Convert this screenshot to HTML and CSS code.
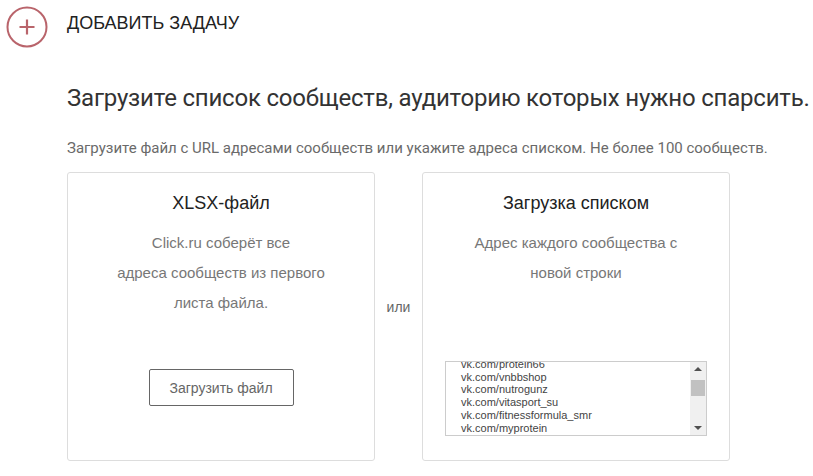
FILE: index.html
```html
<!DOCTYPE html>
<html lang="ru">
<head>
    <meta charset="UTF-8">
    <title>Добавить задачу</title>
    <link rel="stylesheet" href="styles.css">
</head>
<body>
    <div class="header">
        <span class="add-icon">
            <svg width="42" height="42" viewBox="0 0 42 42">
                <circle cx="21" cy="21" r="19.5" fill="none" stroke="#b9646b" stroke-width="2"/>
                <path d="M21 13.5v15M13.5 21h15" stroke="#b9646b" stroke-width="2.2"/>
            </svg>
        </span>
        <span class="header-title">ДОБАВИТЬ ЗАДАЧУ</span>
    </div>

    <div class="content">
        <h1 class="lead">Загрузите список сообществ, аудиторию которых нужно спарсить.</h1>
        <p class="hint">Загрузите файл с URL адресами сообществ или укажите адреса списком. Не более 100 сообществ.</p>

        <div class="choices">
            <div class="card">
                <h3>XLSX-файл</h3>
                <p class="card-text">Click.ru соберёт все<br>адреса сообществ из первого<br>листа файла.</p>
                <button class="upload-btn">Загрузить файл</button>
            </div>

            <div class="or">или</div>

            <div class="card">
                <h3>Загрузка списком</h3>
                <p class="card-text">Адрес каждого сообщества с<br>новой строки</p>
                <div class="list-box">
                    <div class="list-lines">
                        <div>vk.com/protein66</div>
                        <div>vk.com/vnbbshop</div>
                        <div>vk.com/nutrogunz</div>
                        <div>vk.com/vitasport_su</div>
                        <div>vk.com/fitnessformula_smr</div>
                        <div>vk.com/myprotein</div>
                    </div>
                    <div class="scrollbar">
                        <span class="arrow up"></span>
                        <span class="thumb"></span>
                        <span class="arrow down"></span>
                    </div>
                </div>
            </div>
        </div>
    </div>
</body>
</html>
```

FILE: styles.css
```css
body {
    margin: 0;
    font-family: "Liberation Sans", Arial, sans-serif;
    background-color: #fff;
    color: #222;
}

.header {
    display: flex;
    align-items: center;
    height: 54px;
    padding-left: 6px;
}

.add-icon {
    display: flex;
    width: 42px;
    height: 42px;
}

.header-title {
    margin-left: 19px;
    margin-top: -8px;
    font-size: 18px;
    color: #222;
}

.content {
    padding-left: 67px;
}

.lead {
    margin: 30px 0 0;
    font-family: "Roboto", sans-serif;
    font-weight: normal;
    font-size: 24px;
    letter-spacing: -0.2px;
    white-space: nowrap;
    color: #333;
}

.hint {
    margin: 27px 0 0;
    font-family: "Roboto", sans-serif;
    font-size: 15px;
    color: #6a6a6a;
}

.choices {
    display: flex;
    margin-top: 15px;
}

.card {
    width: 306px;
    height: 287px;
    border: 1px solid #ddd;
    border-radius: 3px;
    text-align: center;
    display: flex;
    flex-direction: column;
    align-items: center;
}

.card h3 {
    margin: 20px 0 0;
    font-size: 18px;
    font-weight: normal;
    color: #222;
}

.card-text {
    margin: 14px 0 0;
    font-size: 15px;
    line-height: 30px;
    color: #777;
}

.or {
    width: 47px;
    text-align: center;
    align-self: center;
    margin-top: -20px;
    font-size: 14px;
    color: #666;
}

.upload-btn {
    margin-top: 51px;
    width: 145px;
    height: 37px;
    border: 1px solid #666;
    border-radius: 2px;
    background: #fff;
    font-family: "Liberation Sans", Arial, sans-serif;
    font-size: 14px;
    color: #666;
}

.list-box {
    margin-top: 73px;
    width: 260px;
    height: 73px;
    border: 1px solid #ccc;
    display: flex;
    text-align: left;
    overflow: hidden;
}

.list-lines {
    flex: 1;
    padding-left: 15px;
    margin-top: -4px;
    font-size: 11px;
    line-height: 12.7px;
    color: #444;
}

.scrollbar {
    width: 16px;
    background: #f0f0f0;
    position: relative;
}

.thumb {
    position: absolute;
    left: 1px;
    right: 1px;
    top: 18px;
    height: 16px;
    background: #c1c1c1;
}

.arrow {
    position: absolute;
    left: 4px;
    width: 0;
    height: 0;
    border-left: 4px solid transparent;
    border-right: 4px solid transparent;
}

.arrow.up {
    top: 5px;
    border-bottom: 4px solid #505050;
}

.arrow.down {
    bottom: 5px;
    border-top: 4px solid #505050;
}
```
